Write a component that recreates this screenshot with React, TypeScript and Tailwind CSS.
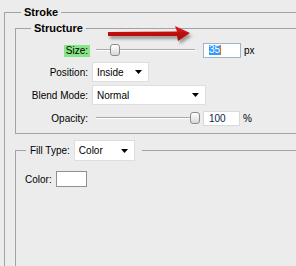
import React from "react";

function SelectBox({ value, className }: { value: string; className: string }) {
  return (
    <div
      className={`flex items-center justify-between bg-white border border-[#dedede] pl-[4px] pr-[6px] ${className}`}
    >
      <span>{value}</span>
      <svg width="7" height="4" viewBox="0 0 7 4">
        <path d="M0 0h7L3.5 4z" fill="#000" />
      </svg>
    </div>
  );
}

function Slider({ thumbLeft }: { thumbLeft: number }) {
  return (
    <div className="relative w-[107px] h-[16px] flex items-center">
      <div className="mx-[4px] flex-1 h-[2px] border-t border-t-[#a9a9a9] border-b border-b-white" />
      <div
        className="absolute top-[2px] w-[10px] h-[12px] rounded-[3px] border border-[#8c8c8c] bg-gradient-to-b from-white to-[#d9d9d9]"
        style={{ left: thumbLeft }}
      />
    </div>
  );
}

function RedArrow() {
  return (
    <svg
      className="absolute left-[104px] top-[22px]"
      width="96"
      height="26"
      viewBox="0 0 96 26"
    >
      <defs>
        <linearGradient id="red" x1="0" y1="0" x2="0" y2="1">
          <stop offset="0" stopColor="#e01818" />
          <stop offset="1" stopColor="#a00808" />
        </linearGradient>
        <filter id="sh" x="-10%" y="-40%" width="130%" height="200%">
          <feDropShadow dx="2" dy="3" stdDeviation="1.6" floodColor="#555" floodOpacity="0.55" />
        </filter>
      </defs>
      <path
        d="M4 10 L73 9.5 L71 4 L86 11 L74 19 L73 14 L4 14 Z"
        fill="url(#red)"
        filter="url(#sh)"
      />
    </svg>
  );
}

export default function App() {
  return (
    <div className="relative w-[296px] h-[266px] overflow-hidden bg-[#ececec] pt-[6px] text-[10px] text-black font-['Liberation_Sans',Arial,sans-serif]">
      <fieldset className="ml-[4px] w-[340px] h-[300px] border-l border-t border-[#a3a3a3]">
        <legend className="ml-[16px] px-[3px] font-bold text-[11px] leading-[13px]">Stroke</legend>

        <fieldset className="ml-[10px] mt-[3px] border-l border-t border-b border-[#a3a3a3] pt-[7px] pb-[7px]">
          <legend className="ml-[15px] px-[3px] font-bold text-[11px] leading-[13px]">Structure</legend>

          <div className="flex items-center h-[16px]">
            <div className="w-[72px] text-right">
              <span className="inline-block bg-[#86e586] pl-[2px] pr-[2px] -mr-[2px] leading-[12px]">Size:</span>
            </div>
            <div className="ml-[4px]">
              <Slider thumbLeft={18} />
            </div>
            <div className="ml-[4px] w-[38px] h-[15px] bg-white border border-[#9db4cc] flex items-center pl-[5px]">
              <span className="bg-[#3399ff] text-white leading-[10px]">35</span>
              <span className="w-[1px] h-[10px] bg-[#e07020]" />
            </div>
            <span className="ml-[3px]">px</span>
          </div>

          <div className="flex items-center h-[20px] mt-[4px]">
            <div className="w-[72px] text-right">Position:</div>
            <SelectBox value="Inside" className="ml-[4px] w-[57px] h-[20px]" />
          </div>

          <div className="flex items-center h-[20px] mt-[3px]">
            <div className="w-[72px] text-right">Blend Mode:</div>
            <SelectBox value="Normal" className="ml-[4px] w-[114px] h-[20px]" />
          </div>

          <div className="flex items-center h-[16px] mt-[5px]">
            <div className="w-[72px] text-right">Opacity:</div>
            <div className="ml-[4px]">
              <Slider thumbLeft={98} />
            </div>
            <div className="ml-[4px] w-[37px] h-[15px] bg-white border border-[#dadada] flex items-center pl-[5px] text-[#0c1c44]">
              100
            </div>
            <span className="ml-[3px]">%</span>
          </div>
        </fieldset>

        <fieldset className="ml-[10px] mt-[6px] h-[200px] border-l border-t border-[#a3a3a3]">
          <legend className="ml-[10px] pl-[4px] pr-[7px]">
            <div className="flex items-center">
              <span>Fill Type:</span>
              <SelectBox value="Color" className="ml-[4px] w-[61px] h-[21px]" />
            </div>
          </legend>

          <div className="flex items-center h-[16px] mt-[10px] pl-[9px]">
            <span>Color:</span>
            <div className="ml-[4px] w-[31px] h-[16px] border border-[#8f8f8f] bg-white" />
          </div>
        </fieldset>
      </fieldset>

      <RedArrow />
    </div>
  );
}
